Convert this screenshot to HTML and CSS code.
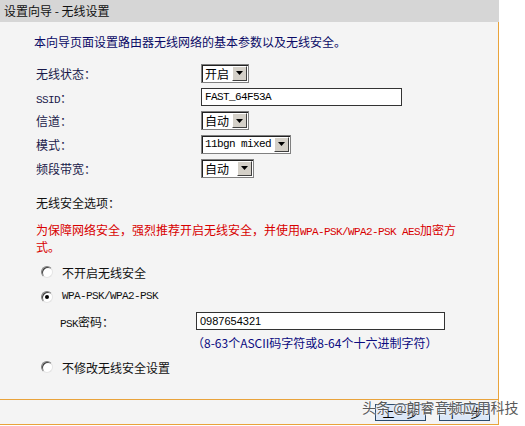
FILE: index.html
```html
<!DOCTYPE html>
<html lang="zh-CN">
<head>
    <meta charset="UTF-8">
    <title>设置向导 - 无线设置</title>
    <link rel="stylesheet" href="styles.css">
</head>
<body>

    <div class="panel">
        <div class="hd">设置向导 - 无线设置</div>

        <div class="bd">
            <p class="intro">本向导页面设置路由器无线网络的基本参数以及无线安全。</p>

            <div class="form">
                <div class="row">
                    <span class="label">无线状态：</span>
                    <div class="sel sel-s"><span class="val">开启</span><span class="arr"><svg width="7" height="4" viewBox="0 0 7 4"><path d="M0 0h7L3.5 4z" fill="#000"/></svg></span></div>
                </div>
                <div class="row">
                    <span class="label"><span class="en">SSID</span>：</span>
                    <div class="txt txt-ssid"><span class="en">FAST_64F53A</span></div>
                </div>
                <div class="row row-tight">
                    <span class="label">信道：</span>
                    <div class="sel sel-s"><span class="val">自动</span><span class="arr"><svg width="7" height="4" viewBox="0 0 7 4"><path d="M0 0h7L3.5 4z" fill="#000"/></svg></span></div>
                </div>
                <div class="row">
                    <span class="label">模式：</span>
                    <div class="sel sel-m"><span class="val en">11bgn mixed</span><span class="arr"><svg width="7" height="4" viewBox="0 0 7 4"><path d="M0 0h7L3.5 4z" fill="#000"/></svg></span></div>
                </div>
                <div class="row">
                    <span class="label">频段带宽：</span>
                    <div class="sel sel-w"><span class="val">自动</span><span class="arr"><svg width="7" height="4" viewBox="0 0 7 4"><path d="M0 0h7L3.5 4z" fill="#000"/></svg></span></div>
                </div>
            </div>

            <p class="sec-title">无线安全选项：</p>
            <p class="warn">为保障网络安全，强烈推荐开启无线安全，并使用<span class="en">WPA-PSK/WPA2-PSK AES</span>加密方式。</p>

            <div class="opts">
                <div class="opt">
                    <span class="radio"></span>
                    <span>不开启无线安全</span>
                </div>
                <div class="opt opt-tall">
                    <span class="radio checked"></span>
                    <span class="en">WPA-PSK/WPA2-PSK</span>
                </div>
                <div class="psk">
                    <span class="psk-label"><span class="en">PSK</span>密码：</span>
                    <div class="txt txt-psk">0987654321</div>
                </div>
                <div class="hint">（8-63个ASCII码字符或8-64个十六进制字符）</div>
                <div class="opt">
                    <span class="radio"></span>
                    <span>不修改无线安全设置</span>
                </div>
            </div>
        </div>

        <div class="ft">
            <button class="btn">上一步</button>
            <button class="btn">下一步</button>
        </div>
    </div>

    <div class="watermark">头条 @朗睿音频应用科技</div>

</body>
</html>
```

FILE: styles.css
```css
body {
    margin: 0;
    padding: 0;
    background-color: #ffffff;
    font-family: "Noto Sans CJK SC", "Liberation Sans", sans-serif;
    font-size: 12px;
    color: #1a1a4a;
}

p {
    margin: 0;
}

.en {
    font-family: "Liberation Mono", "Noto Sans CJK SC", monospace;
    font-size: 11px;
    letter-spacing: -0.6px;
    line-height: 1;
}

.panel {
    width: 499px;
}

.hd {
    height: 22px;
    line-height: 22px;
    padding-left: 4px;
    background-color: #d6d6d6;
    color: #111;
}

.bd {
    height: 378px;
    box-sizing: border-box;
    background-color: #f4f4f4;
    border-right: 1px solid #e9a33b;
    border-bottom: 1px solid #e9a33b;
    padding: 12px 0 0 36px;
}

.intro {
    margin-left: -2px;
    line-height: 16px;
    color: #0a0a66;
}

.form {
    margin-top: 11px;
}

.row {
    display: flex;
    align-items: center;
    height: 24px;
}

.row-tight {
    height: 23px;
}

.label {
    width: 165px;
    flex-shrink: 0;
}

.sel {
    display: flex;
    align-items: center;
    justify-content: space-between;
    height: 19px;
    box-sizing: border-box;
    background: #fff;
    border: 1px solid #808080;
    box-shadow: inset 1px 1px 0 #222;
    padding: 0 1px 0 3px;
    color: #000;
}

.sel-s {
    width: 48px;
}

.sel-m {
    width: 90px;
}

.sel-w {
    width: 53px;
}

.arr {
    display: flex;
    align-items: center;
    justify-content: center;
    width: 15px;
    height: 15px;
    box-sizing: border-box;
    background: #d4d0c8;
    border: 1px solid;
    border-color: #fff #404040 #404040 #fff;
}

.txt {
    display: flex;
    align-items: center;
    box-sizing: border-box;
    background: #fff;
    border: 1px solid #333;
    padding-left: 3px;
    color: #000;
}

.txt-ssid {
    width: 201px;
    height: 18px;
}

.sec-title {
    margin-top: 15px;
    line-height: 16px;
    color: #111;
}

.warn {
    margin-top: 10px;
    line-height: 17px;
    color: #d80000;
    width: 430px;
}

.opts {
    margin-top: 5px;
}

.opt {
    display: flex;
    align-items: center;
    height: 24px;
    padding-left: 5px;
    color: #111;
}

.opt-tall {
    height: 25px;
}

.radio {
    position: relative;
    width: 12px;
    height: 12px;
    box-sizing: border-box;
    border-radius: 50%;
    background: #fff;
    border: 1px solid;
    border-color: #808080 #e4e4e4 #e4e4e4 #808080;
    box-shadow: inset 1px 1px 0 #404040;
    margin-right: 9px;
}

.radio.checked::after {
    content: "";
    position: absolute;
    left: 3px;
    top: 3px;
    width: 4px;
    height: 4px;
    border-radius: 50%;
    background: #000;
}

.psk {
    display: flex;
    align-items: center;
    height: 24px;
}

.psk-label {
    width: 136px;
    padding-left: 24px;
    color: #111;
}

.txt-psk {
    width: 249px;
    height: 18px;
    font-family: "Liberation Sans", sans-serif;
    font-size: 11px;
}

.hint {
    height: 20px;
    line-height: 20px;
    padding-left: 156px;
    margin-bottom: 2px;
    color: #0a0a80;
    white-space: nowrap;
}

.ft {
    display: flex;
    justify-content: flex-end;
    align-items: center;
    gap: 13px;
    height: 25px;
    box-sizing: border-box;
    background-color: #f4f4f4;
    border-right: 1px solid #e9a33b;
    border-bottom: 1px solid #e9a33b;
    padding-right: 8px;
}

.btn {
    width: 51px;
    height: 17px;
    padding: 0;
    background: #dbe7f8;
    border: 1px solid #2b4a6b;
    font-family: "Noto Sans CJK SC", sans-serif;
    font-size: 12px;
    line-height: 15px;
    color: #000;
}

.watermark {
    position: absolute;
    left: 362px;
    top: 397px;
    font-family: "Noto Sans CJK SC", sans-serif;
    font-size: 14px;
    color: #5a5a5a;
    text-shadow: 0 0 2px #fff, 0 0 2px #fff;
    white-space: nowrap;
}
```
